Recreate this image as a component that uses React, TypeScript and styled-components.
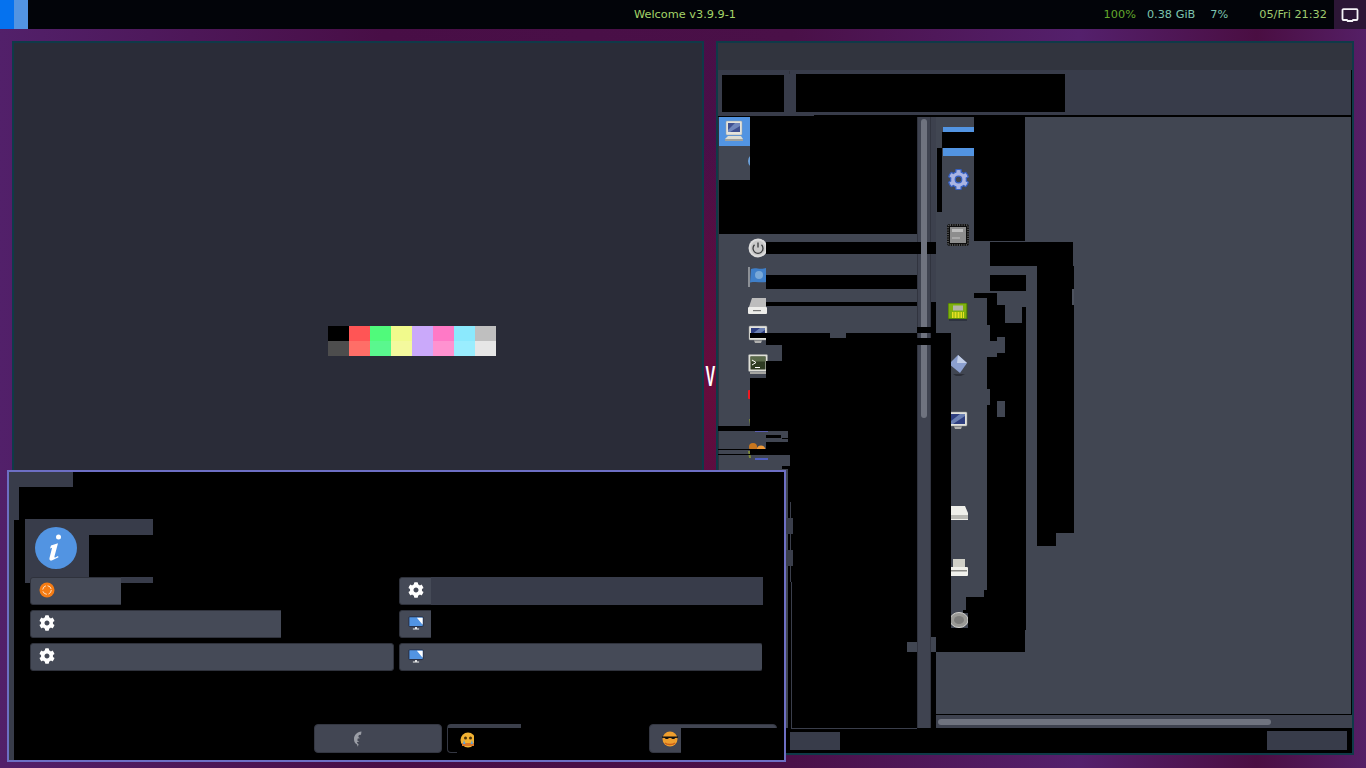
import React from "react";
import styled, { createGlobalStyle } from "styled-components";
import { FaCog } from "react-icons/fa";

const GlobalStyle = createGlobalStyle`
  html, body {
    margin: 0;
    padding: 0;
    width: 1366px;
    height: 768px;
    overflow: hidden;
    background: #470d44;
    font-family: "DejaVu Sans", "Liberation Sans", sans-serif;
  }
`;

const Screen = styled.div`
  position: relative;
  width: 1366px;
  height: 768px;
  overflow: hidden;
  background:
    radial-gradient(ellipse 90px 240px at 710px 380px, #670c3b, transparent),
    linear-gradient(90deg, #52206a 0, #480e46 28%, #4a1048 58%, #54206c 79%, #4a0e42 92%, #551f66 100%);
`;

/* top panel */
const TopBar = styled.div`
  display: grid;
  grid-template-columns: 1fr auto 1fr;
  align-items: center;
  height: 29px;
  background: #020409;
  font-size: 11.3px;
`;

const Workspaces = styled.div`
  display: flex;
  height: 100%;
`;

const Workspace = styled.div<{ $active?: boolean }>`
  width: 14px;
  background: ${(p) => (p.$active ? "#0572ef" : "#5294e2")};
`;

const Welcome = styled.div`
  color: #a4d468;
  padding-left: 4px;
`;

const Tray = styled.div`
  display: flex;
  justify-content: flex-end;
  align-items: center;
  height: 100%;
`;

const Stat = styled.span<{ $color: string; $gap: number }>`
  color: ${(p) => p.$color};
  margin-right: ${(p) => p.$gap}px;
  white-space: nowrap;
`;

const NotifyTile = styled.div`
  width: 32px;
  height: 100%;
  display: flex;
  align-items: center;
  justify-content: center;
  background: #2c1636;
`;

/* terminal */
const Terminal = styled.div`
  position: absolute;
  left: 12px;
  top: 41px;
  width: 692px;
  height: 440px;
  box-sizing: border-box;
  border: 2px solid #0f3a48;
  background: #2a2c38;
  padding: 283px 0 0 314px;
`;

const Palette = styled.div`
  display: grid;
  grid-template-columns: repeat(8, 21px);
  grid-auto-rows: 15px;
`;

const Swatch = styled.div<{ $c: string }>`
  background: ${(p) => p.$c};
`;

const EdgeGlyph = styled.div`
  position: absolute;
  left: 701px;
  top: 360px;
  width: 18px;
  text-align: center;
  color: #fff;
  font: bold 29px/32px "Liberation Sans", sans-serif;
  transform: scaleX(0.5);
`;

/* file manager window */
const FileWindow = styled.div`
  position: absolute;
  left: 716px;
  top: 41px;
  width: 638px;
  height: 714px;
  box-sizing: border-box;
  border: 2px solid #0f3a48;
  display: flex;
  flex-direction: column;
  background: #000;
`;

const TitleBar = styled.div`
  height: 27px;
  background: #31343e;
`;

const Toolbar = styled.div`
  height: 45px;
  background: #383c4a;
  border-bottom: 2px solid #000;
  border-right: 1px solid #000;
`;

const Panes = styled.div`
  display: flex;
  height: 612px;
`;

const Sidebar = styled.div`
  width: 199px;
  box-sizing: border-box;
  border-left: 1px solid #2f323c;
  background: #414652;
  overflow: hidden;
`;

const SideRow = styled.div<{ $selected?: boolean }>`
  height: 29px;
  box-sizing: border-box;
  display: flex;
  align-items: center;
  padding-left: ${(p) => (p.$selected ? 4 : 29)}px;
  padding-top: ${(p) => (p.$selected ? 0 : 2)}px;
  background: ${(p) => (p.$selected ? "#5294e2" : "transparent")};
`;

const ScrollColumn = styled.div`
  width: 14px;
  box-sizing: border-box;
  padding: 2px 3px;
  background: #3f4350;
  border-left: 1px solid #31343f;
  border-right: 1px solid #31343f;
`;

const VThumb = styled.div`
  height: 299px;
  width: 6px;
  border-radius: 3px;
  background: #6f737f;
`;

const Divider = styled.div`
  width: 5px;
  background: #3d414e;
`;

const MainColumn = styled.div`
  flex: 1;
  display: flex;
  flex-direction: column;
  background: #414652;
`;

const Pane = styled.div`
  flex: 1;
  padding-left: 7px;
  border-bottom: 1px solid #000;
  border-right: 1px solid #000;
  overflow: hidden;
`;

const SelectedTile = styled.div`
  width: 31px;
  height: 29px;
  margin-top: 10px;
  background: #5294e2;
`;

const PaneIcon = styled.div<{ $gap: number }>`
  width: 22px;
  height: 22px;
  margin: ${(p) => p.$gap}px 0 0 4px;
  display: flex;
  align-items: center;
  justify-content: center;
`;

const HScroll = styled.div`
  height: 13px;
  box-sizing: border-box;
  padding: 4px 2px 3px;
  background: #3e424f;
`;

const HThumb = styled.div`
  width: 333px;
  height: 6px;
  border-radius: 3px;
  background: #6f737f;
`;

const StatusBar = styled.div`
  flex: 1;
  display: flex;
  justify-content: space-between;
  padding: 3px 5px 3px 72px;
`;

const StatusPatch = styled.div<{ $w: number }>`
  width: ${(p) => p.$w}px;
  height: 19px;
  background: #383c4a;
`;

/* dialog */
const Dialog = styled.div`
  position: absolute;
  left: 7px;
  top: 470px;
  width: 779px;
  height: 292px;
  box-sizing: border-box;
  border: 2px solid #6d6fc4;
  background: #000;
  padding: 47px 0 0 16px;
`;

const InfoTile = styled.div`
  width: 64px;
  height: 64px;
  box-sizing: border-box;
  padding: 0 2px 6px 0;
  background: #383c4a;
  display: flex;
  align-items: center;
  justify-content: center;
`;

const ActionGrid = styled.div`
  display: grid;
  grid-template-columns: 364px 364px;
  grid-auto-rows: 28px;
  column-gap: 5px;
  row-gap: 5px;
  margin: -6px 0 0 5px;
`;

const ActionButton = styled.div`
  display: flex;
  align-items: center;
  padding-left: 8px;
  box-sizing: border-box;
  background: #454a57;
  border: 1px solid #2f323c;
  border-radius: 3px;
  color: #fff;
`;

const IconSlot = styled.div`
  width: 16px;
  height: 16px;
  margin-bottom: 2px;
  display: flex;
  align-items: center;
  justify-content: center;
`;

const Footer = styled.div`
  display: flex;
  gap: 5px;
  margin: 53px 0 0 289px;
`;

const FooterButton = styled.div<{ $ghost?: boolean; $push?: boolean; $inset: number }>`
  width: 128px;
  height: 29px;
  box-sizing: border-box;
  display: flex;
  align-items: center;
  padding-left: ${(p) => p.$inset}px;
  background: ${(p) => (p.$ghost ? "#000" : "#424653")};
  border: 1px solid #343742;
  border-top: ${(p) => (p.$ghost ? "4px solid #3b3f4b" : "1px solid #343742")};
  border-radius: 4px;
  margin-left: ${(p) => (p.$push ? 69 : 0)}px;
`;

/* leftovers of the stale frame buffer, page coordinates */
const Damage = styled.div`
  position: absolute;
  inset: 0;
  pointer-events: none;
`;

const Block = styled.div<{ $x: number; $y: number; $w: number; $h: number; $c?: string }>`
  position: absolute;
  left: ${(p) => p.$x}px;
  top: ${(p) => p.$y}px;
  width: ${(p) => p.$w}px;
  height: ${(p) => p.$h}px;
  background: ${(p) => p.$c || "#000"};
`;

type Rect = [number, number, number, number, string?];

const GRAY = "#414652";
const DIM = "#383c4a";
const LINE = "#3a3e4b";

const windowDamage: Rect[] = [
  [718, 115, 814, 116, DIM],
  [722, 75, 784, 112],
  [796, 74, 1065, 112],
  [789, 71, 790, 74, "#2f323c"],
  [750, 117, 917, 234],
  [719, 180, 750, 234],
  [766, 242, 921, 254],
  [927, 242, 936, 254],
  [766, 275, 917, 289],
  [766, 302, 917, 306],
  [931, 302, 936, 327],
  [917, 327, 936, 333],
  [750, 333, 830, 338],
  [846, 333, 917, 338],
  [766, 338, 917, 345],
  [782, 345, 917, 361],
  [766, 361, 917, 378],
  [750, 378, 917, 426],
  [718, 426, 917, 431],
  [788, 431, 917, 728],
  [917, 338, 931, 345],
  [766, 435, 781, 438],
  [782, 438, 788, 439],
  [766, 442, 788, 450],
  [718, 449, 766, 450],
  [750, 450, 788, 455],
  [718, 454, 750, 455],
  [782, 466, 790, 469],
  [788, 455, 790, 466, GRAY],
  [786, 728, 917, 732],
  [907, 642, 917, 652, GRAY],
  [931, 333, 951, 630],
  [931, 630, 936, 728],
  [931, 637, 936, 652, GRAY],
  [936, 630, 1025, 652],
  [942, 132, 974, 148],
  [974, 117, 1025, 241],
  [937, 148, 942, 212],
  [990, 242, 1073, 266],
  [1037, 266, 1074, 533],
  [1072, 289, 1074, 305, "#4d525e"],
  [1037, 533, 1056, 546],
  [990, 275, 1026, 291],
  [974, 293, 997, 298],
  [987, 298, 997, 305],
  [987, 305, 1005, 325],
  [990, 325, 997, 341],
  [997, 325, 1005, 337],
  [1022, 307, 1026, 323],
  [1005, 323, 1026, 357],
  [997, 353, 1005, 357],
  [987, 357, 1026, 389],
  [990, 389, 1026, 401],
  [990, 401, 997, 405],
  [1005, 401, 1026, 417],
  [987, 405, 997, 417],
  [987, 417, 1026, 590],
  [984, 590, 1026, 597],
  [966, 597, 1026, 610],
  [963, 610, 1026, 613],
  [968, 613, 1026, 630],
  [951, 628, 968, 630],
  [791, 582, 792, 728, LINE],
  [791, 728, 917, 729, LINE],
  [790, 502, 791, 582, LINE],
  [786, 518, 793, 534, LINE],
  [786, 550, 793, 566, LINE],
];

const dialogDamage: Rect[] = [
  [9, 472, 73, 487, DIM],
  [9, 487, 19, 520, DIM],
  [9, 520, 14, 760, DIM],
  [89, 519, 153, 535, DIM],
  [121, 577, 153, 583, DIM],
  [121, 583, 394, 605],
  [153, 577, 394, 583],
  [281, 610, 394, 638],
  [431, 610, 763, 638],
  [431, 577, 763, 605, DIM],
  [762, 643, 763, 671],
  [474, 728, 521, 754],
  [521, 724, 576, 754],
  [457, 752, 474, 754],
  [681, 728, 778, 754],
];

const paletteColors = [
  "#000000", "#ff5555", "#50fa7b", "#f1fa8c", "#caa9fa", "#ff79c6", "#8be9fd", "#bfbfbf",
  "#4d4d4d", "#ff6e67", "#5af78e", "#f4f99d", "#caa9fa", "#ff92d0", "#9aedfe", "#e6e6e6",
];

function Blocks({ rects }: { rects: Rect[] }) {
  return (
    <Damage>
      {rects.map(([x1, y1, x2, y2, c], i) => (
        <Block key={i} $x={x1} $y={y1} $w={x2 - x1} $h={y2 - y1} $c={c} />
      ))}
    </Damage>
  );
}

/* icons */
const NotifyIcon = () => (
  <svg width="18" height="14" viewBox="0 0 18 14">
    <path d="M2.5 1.2h13a1 1 0 0 1 1 1V11a1 1 0 0 1-1 1h-3.4l-.8 1H6.700l-.8-1H2.500a1 1 0 0 1-1-1V2.200a1 1 0 0 1 1-1z" fill="none" stroke="#f4f2f6" strokeWidth="1.8" />
  </svg>
);

const InfoIcon = () => (
  <svg width="42" height="42" viewBox="0 0 42 42">
    <circle cx="21" cy="21" r="21" fill="#5294e2" />
    <circle cx="23.500" cy="10" r="2.500" fill="#fff" />
    <path d="M16 18.500l7-2.300-3.500 13c-.3 1.200.3 1.600 1.200 1.100l2.300-1.200.5 1.200-6.200 3c-2 .9-3.300-.1-2.800-2.200l2.600-10.300-2.100.6z" fill="#fff" />
  </svg>
);

const UpdateIcon = () => (
  <svg width="16" height="16" viewBox="0 0 16 16">
    <circle cx="8" cy="8" r="7.500" fill="#f57c14" />
    <circle cx="8" cy="8" r="4.300" fill="none" stroke="#ffe2c4" strokeWidth="1" strokeDasharray="5 1.800" />
  </svg>
);

const DisplayIcon = () => (
  <svg width="18" height="16" viewBox="0 0 18 16">
    <rect x="1" y="1" width="16" height="11" rx="1" fill="#5294e2" stroke="#23283a" />
    <path d="M10 2h6.500v8z" fill="#fff" />
    <path d="M8 12.500h2v1.800h2.500v1H5.500v-1H8z" fill="#f2f2f2" />
  </svg>
);

const FeatherIcon = () => (
  <svg width="10" height="16" viewBox="0 0 10 16">
    <path d="M8.500 0.500C4 1 1 4 1 8c0 2.500.8 4.500 3 5.500l.8 2.200.8-2.500c-1-.6-1.600-1.200-1.600-2.200l2.300-.4-2-1 .4-2 2.300-.3-1.700-1.200.6-2 2.100-.4z" fill="#9b9ea6" />
  </svg>
);

const CryFace = () => (
  <svg width="16" height="16" viewBox="0 0 16 16">
    <circle cx="8" cy="8" r="7.500" fill="#f2b233" />
    <rect x="2" y="11" width="12" height="3" fill="#d9782a" />
    <circle cx="5.500" cy="6" r="1.500" fill="#4a3208" />
    <circle cx="10.500" cy="6" r="1.500" fill="#4a3208" />
    <path d="M4 8l1.500 4L3 12z M12 8l1 4h-2.500z" fill="#5aa2e0" />
  </svg>
);

const CoolFace = () => (
  <svg width="16" height="16" viewBox="0 0 16 16">
    <circle cx="8" cy="8" r="7.500" fill="#ef9f2e" />
    <path d="M3 12c1.800 2 8.200 2 10 0" fill="none" stroke="#c9601a" strokeWidth="1.400" />
    <path d="M0 5.500h16v1.200l-3 .2c-.4 1.600-3.200 1.600-3.800.1H6.800c-.6 1.500-3.400 1.500-3.800-.1l-3-.2z" fill="#111" />
  </svg>
);

const ComputerIcon = () => (
  <svg width="22" height="22" viewBox="0 0 22 22">
    <rect x="3" y="1" width="16" height="14" rx="1" fill="#e4e4dc" stroke="#9a9c9c" strokeWidth=".5" />
    <rect x="5" y="3" width="12" height="9" fill="#3f5090" />
    <path d="M5 10l7-7h5v3l-10 6H5z" fill="#6f86bc" />
    <path d="M5 16h13l2 3H2z" fill="#dcdcd2" />
    <rect x="2" y="19" width="18" height="2" fill="#9fa19d" />
  </svg>
);

const PowerIcon = () => (
  <svg width="20" height="20" viewBox="0 0 20 20">
    <circle cx="10" cy="10" r="9.500" fill="#dcdcdc" />
    <circle cx="10" cy="10" r="7.500" fill="#c9c9c9" />
    <path d="M10 4.500v5M6.500 6.800a5 5 0 1 0 7 0" fill="none" stroke="#3a3c3e" strokeWidth="1.300" />
  </svg>
);

const FlagIcon = () => (
  <svg width="20" height="20" viewBox="0 0 20 20">
    <rect x="0" y="0" width="2" height="20" fill="#8c9096" />
    <path d="M3 2c5-2 8 1 15-1v14c-6 1-9-1-16 .5z" fill="#3f7fc9" />
    <circle cx="11" cy="8" r="4" fill="#7aa9d8" />
  </svg>
);

const DriveIcon = () => (
  <svg width="20" height="18" viewBox="0 0 20 18">
    <path d="M4 1h14v9H1z" fill="#bdbdbd" />
    <rect x="0" y="10" width="19" height="7" rx="1" fill="#ededea" />
    <rect x="5" y="13" width="8" height="1.200" fill="#777" />
  </svg>
);

const MonitorIcon = () => (
  <svg width="20" height="20" viewBox="0 0 20 20">
    <rect x="1" y="1" width="18" height="14" rx="1" fill="#e2e2dc" stroke="#8f9192" strokeWidth=".5" />
    <rect x="3" y="3" width="14" height="10" fill="#2f3f80" />
    <path d="M3 10l9-7h5v2L5 13H3z" fill="#6a7fb2" />
    <path d="M6 15.500h8l-1 2.500H7z" fill="#b0b0ae" />
  </svg>
);

const TerminalIcon = () => (
  <svg width="20" height="20" viewBox="0 0 20 20">
    <rect x="0.500" y="0.500" width="19" height="17" rx="1" fill="#dfdfd8" stroke="#8f9192" strokeWidth=".5" />
    <rect x="2.500" y="2.500" width="15" height="13" fill="#2e3b22" />
    <rect x="2.500" y="2.500" width="15" height="5" fill="#5a6a4a" />
    <path d="M4 6l4 2.500L4 11" fill="none" stroke="#fff" strokeWidth="1" />
    <rect x="7" y="13" width="5" height="1" fill="#fff" />
    <rect x="2" y="18" width="16" height="2" fill="#a6a6a2" />
  </svg>
);

const AlertIcon = () => (
  <svg width="20" height="20" viewBox="0 0 20 20">
    <rect x="0" y="7" width="5" height="9" rx="1" fill="#f01820" />
  </svg>
);

const PersonIcon = () => (
  <svg width="22" height="22" viewBox="0 0 22 22">
    <path d="M1 8l2 12h2l-2-12z" fill="#7d8a3a" />
    <rect x="7" y="20" width="13" height="1" fill="#5b5fb0" />
  </svg>
);

const UsersIcon = () => (
  <svg width="24" height="24" viewBox="0 0 24 24">
    <circle cx="5" cy="8" r="4" fill="#c8761e" />
    <circle cx="13" cy="11" r="4.500" fill="#f09a38" />
    <rect x="7" y="19" width="13" height="2" fill="#4f5fc0" />
    <path d="M0 12l1 7h2l-1-7z" fill="#7d8a3a" />
  </svg>
);

const BlueDot = () => (
  <svg width="6" height="14" viewBox="0 0 6 14">
    <circle cx="7" cy="7" r="7" fill="#6a9fd8" />
  </svg>
);

const GearIcon = () => (
  <FaCog size={21} color="#aab4e2" stroke="#3560c4" strokeWidth={30} />
);

const ChipIcon = () => (
  <svg width="22" height="22" viewBox="0 0 22 22">
    <rect x="0" y="0" width="22" height="22" rx="3" fill="#0e0e0e" />
    <rect x="1" y="1" width="20" height="20" rx="2" fill="none" stroke="#bdbdbd" strokeWidth=".8" strokeDasharray="1 1.300" />
    <rect x="3" y="3" width="16" height="16" fill="#8d8d8d" />
    <rect x="5" y="5" width="11" height="3" fill="#bdbdbd" />
    <rect x="5" y="13" width="8" height="2" fill="#a8a8a8" />
  </svg>
);

const CardIcon = () => (
  <svg width="20" height="18" viewBox="0 0 20 18">
    <rect x="0" y="0" width="19" height="16" fill="#7fb00e" stroke="#3f6806" />
    <rect x="5" y="2.500" width="10" height="5" fill="#b4b4a8" />
    <path d="M4 9h12v6H4z" fill="#e8e020" />
    <path d="M6 9v6M9 9v6M12 9v6M14.500 9v6" stroke="#7fb00e" strokeWidth="1" />
    <rect x="1" y="16" width="18" height="2" fill="#2e3340" />
  </svg>
);

const DiamondIcon = () => (
  <svg width="22" height="22" viewBox="0 0 22 22">
    <path d="M11 0l9 8-7 10-11-9z" fill="#8b9fcf" />
    <path d="M11 0l9 8-10 0z" fill="#c3cfe8" />
    <path d="M6 19h12l-4 2H9z" fill="#2c2f38" />
  </svg>
);

const WhiteDriveIcon = () => (
  <svg width="22" height="18" viewBox="0 0 22 18">
    <path d="M3 2h15l3 7v7H3z" fill="#efefea" />
    <rect x="3" y="11" width="18" height="4" fill="#b9b9b4" />
  </svg>
);

const PrinterIcon = () => (
  <svg width="22" height="20" viewBox="0 0 22 20">
    <rect x="6" y="1" width="12" height="8" fill="#d0d0c8" />
    <rect x="3" y="9" width="18" height="9" rx="1" fill="#f1f1ec" />
    <rect x="4" y="12" width="16" height="1.500" fill="#8a8a86" />
  </svg>
);

const DiscIcon = () => (
  <svg width="22" height="18" viewBox="0 0 22 18">
    <ellipse cx="12" cy="9" rx="9" ry="7.500" fill="#9a9a96" stroke="#d2d2ce" />
    <ellipse cx="12" cy="9" rx="5" ry="4" fill="#7c7c7a" />
  </svg>
);

const sideRows: React.ReactNode[] = [
  <ComputerIcon />,
  <BlueDot />,
  null,
  null,
  <PowerIcon />,
  <FlagIcon />,
  <DriveIcon />,
  <MonitorIcon />,
  <TerminalIcon />,
  <AlertIcon />,
  <PersonIcon />,
  <UsersIcon />,
];

const paneIcons: [number, React.ReactNode][] = [
  [13, <GearIcon />],
  [33, <ChipIcon />],
  [55, <CardIcon />],
  [32, <DiamondIcon />],
  [33, <MonitorIcon />],
  [70, <WhiteDriveIcon />],
  [33, <PrinterIcon />],
  [30, <DiscIcon />],
];

export default function App() {
  return (
    <Screen>
      <GlobalStyle />
      <TopBar>
        <Workspaces>
          <Workspace $active />
          <Workspace />
        </Workspaces>
        <Welcome>Welcome v3.9.9-1</Welcome>
        <Tray>
          <Stat $color="#62a82c" $gap={11}>100%</Stat>
          <Stat $color="#7cc4ae" $gap={15}>0.38 GiB</Stat>
          <Stat $color="#7cc4ae" $gap={31}>7%</Stat>
          <Stat $color="#a0cc70" $gap={7}>05/Fri 21:32</Stat>
          <NotifyTile>
            <NotifyIcon />
          </NotifyTile>
        </Tray>
      </TopBar>

      <Terminal>
        <Palette>
          {paletteColors.map((c, i) => (
            <Swatch key={i} $c={c} />
          ))}
        </Palette>
      </Terminal>
      <EdgeGlyph>V</EdgeGlyph>

      <FileWindow>
        <TitleBar />
        <Toolbar />
        <Panes>
          <Sidebar>
            {sideRows.map((icon, i) => (
              <SideRow key={i} $selected={i === 0}>
                {icon}
              </SideRow>
            ))}
          </Sidebar>
          <ScrollColumn>
            <VThumb />
          </ScrollColumn>
          <Divider />
          <MainColumn>
            <Pane>
              <SelectedTile />
              {paneIcons.map(([gap, icon], i) => (
                <PaneIcon key={i} $gap={gap}>
                  {icon}
                </PaneIcon>
              ))}
            </Pane>
            <HScroll>
              <HThumb />
            </HScroll>
          </MainColumn>
        </Panes>
        <StatusBar>
          <StatusPatch $w={50} />
          <StatusPatch $w={80} />
        </StatusBar>
      </FileWindow>

      <Blocks rects={windowDamage} />

      <Dialog>
        <InfoTile>
          <InfoIcon />
        </InfoTile>
        <ActionGrid>
          <ActionButton>
            <IconSlot><UpdateIcon /></IconSlot>
          </ActionButton>
          <ActionButton>
            <IconSlot><FaCog size={16} /></IconSlot>
          </ActionButton>
          <ActionButton>
            <IconSlot><FaCog size={16} /></IconSlot>
          </ActionButton>
          <ActionButton>
            <IconSlot><DisplayIcon /></IconSlot>
          </ActionButton>
          <ActionButton>
            <IconSlot><FaCog size={16} /></IconSlot>
          </ActionButton>
          <ActionButton>
            <IconSlot><DisplayIcon /></IconSlot>
          </ActionButton>
        </ActionGrid>
        <Footer>
          <FooterButton $inset={38}>
            <FeatherIcon />
          </FooterButton>
          <FooterButton $ghost $inset={12}>
            <CryFace />
          </FooterButton>
          <FooterButton $push $inset={12}>
            <CoolFace />
          </FooterButton>
        </Footer>
      </Dialog>

      <Blocks rects={dialogDamage} />
    </Screen>
  );
}
